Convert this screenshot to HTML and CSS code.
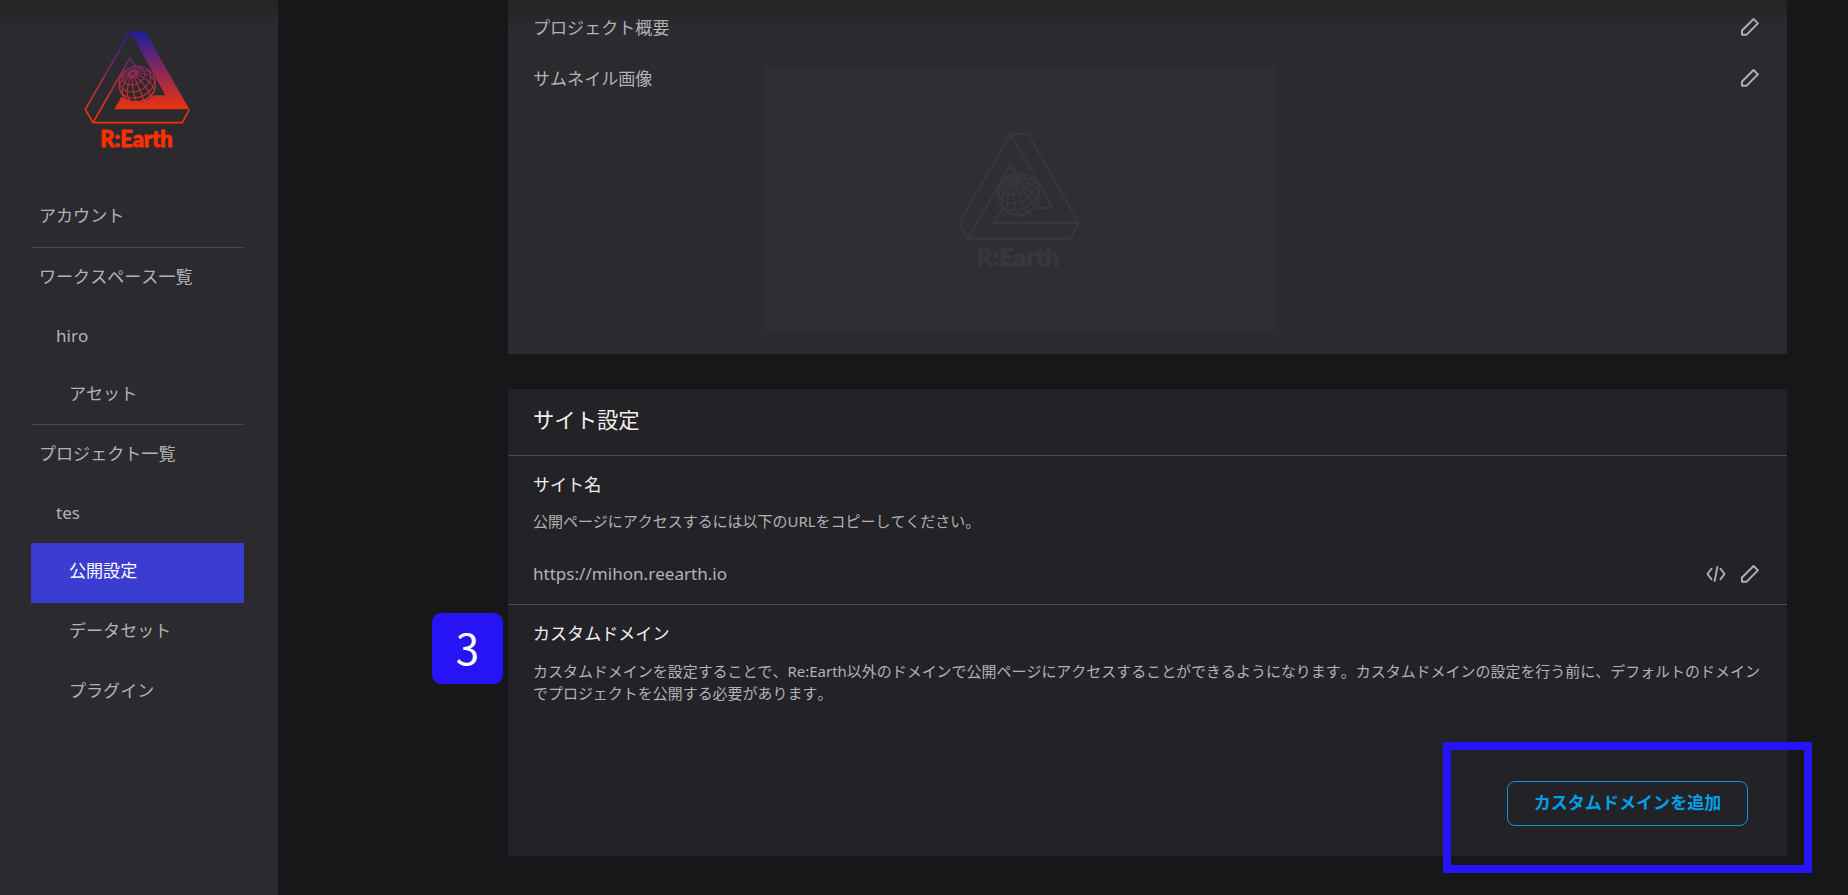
FILE: index.html
```html
<!DOCTYPE html>
<html lang="ja">
<head>
<meta charset="utf-8">
<title>Re:Earth 公開設定</title>
<link rel="stylesheet" href="styles.css">
</head>
<body>
<svg class="defs" aria-hidden="true">
  <defs>
    <linearGradient id="brand" gradientUnits="userSpaceOnUse" x1="0" y1="64" x2="0" y2="340">
      <stop offset="0.03" stop-color="#23209a"/>
      <stop offset="0.5" stop-color="#9b2a4e"/>
      <stop offset="0.82" stop-color="#e63214"/>
      <stop offset="1" stop-color="#ff3000"/>
    </linearGradient>
    <path id="globe" class="globe-lines" fill="none"/>
    <symbol id="pencil" viewBox="0 0 20 20">
      <path d="M2 17.8v-4.3L13.6 2l4.3 4.3L6.4 17.8z" fill="none" stroke="currentColor" stroke-width="1.9" stroke-linejoin="round"/>
    </symbol>
  </defs>
</svg>
<div class="app">
  <aside class="sidebar">
    <svg class="logo" viewBox="0 0 480 450">
      <path fill="url(#brand)" d="M210 64H255L388 298H163L184 260L210 272H262L283 256H316z"/>
      <path fill="none" stroke="url(#brand)" stroke-width="5" stroke-linejoin="round" d="M210 66L76 298L99 338L210 144L228 172M99 338H367L388 298"/>
      <circle cx="232" cy="223" r="56" fill="#2b2a2f"/>
      <use href="#globe" stroke="url(#brand)" stroke-width="3.5"/>
      <text class="brand" x="121" y="412" textLength="217" lengthAdjust="spacingAndGlyphs" fill="#ff3000" stroke="#ff3000">R:Earth</text>
    </svg>
    <nav class="nav">
      <a class="item ruled">アカウント</a>
      <a class="item">ワークスペース一覧</a>
      <a class="item sub">hiro</a>
      <a class="item leaf ruled">アセット</a>
      <a class="item">プロジェクト一覧</a>
      <a class="item sub">tes</a>
      <a class="item leaf active">公開設定</a>
      <a class="item leaf">データセット</a>
      <a class="item leaf">プラグイン</a>
    </nav>
  </aside>
  <main class="main">
    <section class="panel project">
      <div class="row">
        <span class="label">プロジェクト概要</span>
        <svg class="icon"><use href="#pencil"/></svg>
      </div>
      <div class="row">
        <span class="label">サムネイル画像</span>
        <div class="thumb">
          <svg class="thumb-logo" viewBox="0 0 480 450">
            <g fill="none" stroke="#38373d" stroke-width="6" stroke-linejoin="round">
              <path d="M210 65L76 298L99 338L210 144L232 180M99 338H367L388 298L255 65H210L320 258H278M190 262L165 298H388"/>
            </g>
            <circle cx="232" cy="223" r="56" fill="#2f2e34"/>
            <use href="#globe" stroke="#38373d" stroke-width="4.5"/>
            <text class="brand" x="121" y="410" textLength="217" lengthAdjust="spacingAndGlyphs" fill="#38373d" stroke="#38373d">R:Earth</text>
          </svg>
        </div>
        <svg class="icon"><use href="#pencil"/></svg>
      </div>
    </section>
    <section class="panel site">
      <h2 class="heading">サイト設定</h2>
      <div class="block name">
        <h3 class="title">サイト名</h3>
        <p class="desc">公開ページにアクセスするには以下のURLをコピーしてください。</p>
        <div class="url-row">
          <span class="url">https://mihon.reearth.io</span>
          <svg class="icon code" viewBox="0 0 20 20"><path d="M5.6 4.6L1.4 10l4.2 5.4M14.4 4.6l4.2 5.4l-4.2 5.4M11.4 2.8L8.6 17.2" fill="none" stroke="currentColor" stroke-width="1.8" stroke-linecap="round" stroke-linejoin="round"/></svg>
          <svg class="icon"><use href="#pencil"/></svg>
        </div>
      </div>
      <div class="block domain">
        <h3 class="title">カスタムドメイン</h3>
        <p class="desc">カスタムドメインを設定することで、Re:Earth以外のドメインで公開ページにアクセスすることができるようになります。カスタムドメインの設定を行う前に、デフォルトのドメイン<br>でプロジェクトを公開する必要があります。</p>
        <button class="add">カスタムドメインを追加</button>
      </div>
    </section>
  </main>
</div>
<div class="top-shadow"></div>
<div class="step">3</div>
<div class="highlight"></div>
<script src="globe.js"></script>
</body>
</html>
```
FILE: styles.css
```css
* { box-sizing: border-box; }
html { height: 895px; overflow: hidden; background: #171719; }
body {
  margin: 0;
  height: 895px;
  overflow: hidden;
  position: relative;
  background: #171719;
  color: #b3b3b4;
  font-family: "Noto Sans", "Noto Sans CJK JP", sans-serif;
  font-size: 17.07px;
  font-kerning: none;
}
.defs { position: absolute; width: 0; height: 0; }
.app { display: flex; height: 895px; }

.sidebar { width: 278px; background: #2b2a2f; padding: 10px 34px 0 31px; }
.logo { display: block; width: 160px; height: 150px; margin: 0 0 26px 29px; }
.brand { font-family: Lato, sans-serif; font-weight: 900; font-size: 66px; stroke-width: 2.5px; }
.nav { display: flex; flex-direction: column; }
.item { height: 59.3px; line-height: 57px; padding-left: 8px; white-space: nowrap; }
.item.ruled { height: 61.6px; line-height: 59px; border-bottom: 1px solid #49484c; }
.item.leaf { line-height: 56px; }
.item.leaf.ruled { height: 59.3px; }
.item.sub { padding-left: 25px; height: 59px; }
.item.leaf { padding-left: 38px; }
.active { background: #3b3cd0; color: #fff; height: 60px; }

.main { width: 1279px; margin-left: 230px; display: flex; flex-direction: column; gap: 35px; }
.panel { padding: 0 25px; }
.project { height: 354px; background: #2b2a2f; padding-top: 16px; }
.row { display: flex; align-items: flex-start; min-height: 51px; }
.label { width: 231px; line-height: 23px; }
.row .icon { margin: 1px 2px 0 auto; }
.icon { display: block; flex: none; width: 20px; height: 20px; color: #b3b3b4; }
.thumb { width: 512px; height: 264px; background: #2f2e34; padding: 42px 0 0 166px; }
.thumb-logo { display: block; width: 184px; height: 172.5px; }

.site { height: 467px; background: #232226; }
.heading, .block { margin: 0 -25px; padding: 0 25px; }
.heading { height: 67px; line-height: 61px; font-size: 21.33px; font-weight: 400; color: #f0f0f0; border-bottom: 1px solid #4b4b4b; }
.title { margin: 0; font-size: 17.07px; line-height: 24px; font-weight: 400; color: #f0f0f0; }
.desc { margin: 0; font-size: 14.97px; line-height: 22px; white-space: nowrap; }
.name { height: 149px; padding-top: 17px; border-bottom: 1px solid #4b4b4b; }
.name .desc { margin-top: 13px; }
.url-row { display: flex; align-items: center; gap: 14px; margin: 30px 2px 0 0; }
.url { flex: 1; line-height: 24px; }
.domain { padding-top: 17px; display: flex; flex-direction: column; }
.domain .desc { margin-top: 14px; }
.add {
  align-self: flex-end;
  width: 241px;
  height: 45px;
  margin: 77px 14px 0 0;
  padding: 0 0 4px;
  background: none;
  border: 1px solid #0b96dc;
  border-radius: 8px;
  color: #00a0e8;
  font: bold 17.07px "Noto Sans", "Noto Sans CJK JP", sans-serif;
}

/* overlays */
.top-shadow {
  position: absolute;
  inset: 0 0 auto;
  height: 26px;
  background: linear-gradient(rgba(24, 24, 20, .4), rgba(24, 24, 20, 0));
}
.step {
  position: absolute;
  left: 432px;
  top: 613px;
  width: 71px;
  height: 71px;
  border-radius: 9px;
  background: #2614f5;
  color: #fff;
  font-family: "Noto Sans CJK JP", sans-serif;
  font-size: 42px;
  line-height: 67px;
  text-align: center;
}
.highlight {
  position: absolute;
  left: 1443px;
  top: 742px;
  width: 369px;
  height: 131px;
  border: 8px solid #2614f8;
}
```
FILE: globe.js
```js
// Orthographic graticule of the logo globe, pole tilted towards the viewer.
const CX = 232, CY = 223, R = 55, TILT = 0.87, ROLL = -0.4;
function project(lat, lon) {
  const x = Math.cos(lat) * Math.sin(lon);
  const y = Math.sin(lat);
  const z = Math.cos(lat) * Math.cos(lon);
  const v = y * Math.cos(TILT) - z * Math.sin(TILT);
  const depth = y * Math.sin(TILT) + z * Math.cos(TILT);
  return {
    x: CX + R * (x * Math.cos(ROLL) + v * Math.sin(ROLL)),
    y: CY - R * (v * Math.cos(ROLL) - x * Math.sin(ROLL)),
    visible: depth >= 0
  };
}
function trace(points) {
  let out = "", pen = false;
  for (const p of points) {
    if (p.visible) out += (pen ? "L" : "M") + p.x.toFixed(1) + " " + p.y.toFixed(1);
    pen = p.visible;
  }
  return out;
}
const rad = d => d * Math.PI / 180;
let d = `M${CX - R} ${CY}a${R} ${R} 0 1 0 ${2 * R} 0a${R} ${R} 0 1 0 ${-2 * R} 0`;
for (let lat = -40; lat <= 76; lat += 23) {
  const pts = [];
  for (let lon = 0; lon <= 360; lon += 5) pts.push(project(rad(lat), rad(lon)));
  d += trace(pts);
}
for (let lon = 0; lon < 360; lon += 24) {
  const pts = [];
  for (let lat = -90; lat <= 85; lat += 5) pts.push(project(rad(lat), rad(lon)));
  d += trace(pts);
}
document.getElementById("globe").setAttribute("d", d);
```
